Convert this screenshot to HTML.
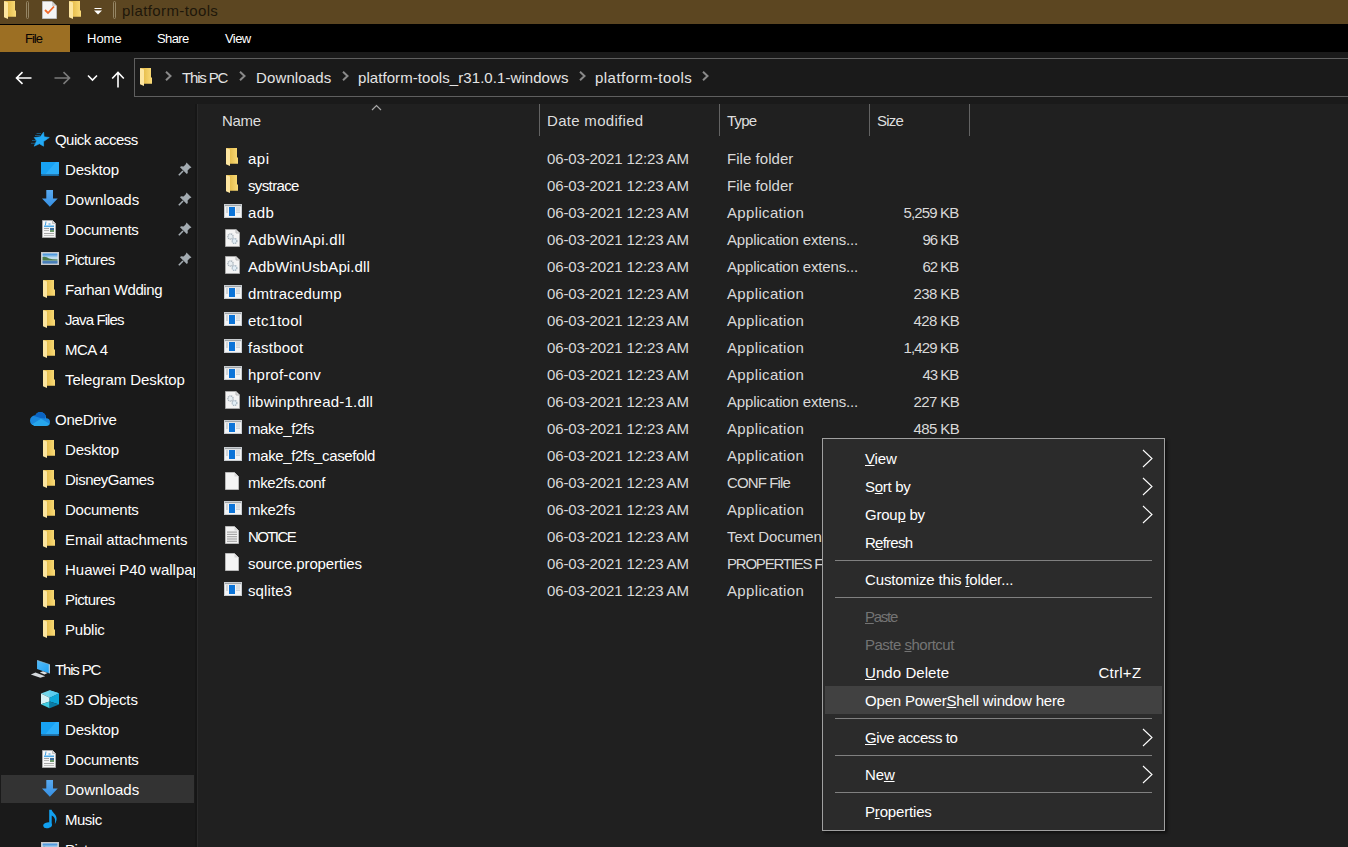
<!DOCTYPE html>
<html><head><meta charset="utf-8"><style>
*{margin:0;padding:0;box-sizing:border-box}
html,body{width:1348px;height:847px;overflow:hidden;background:#202020;font-family:"Liberation Sans",sans-serif;font-size:15px;color:#fff}
.a{position:absolute;white-space:nowrap}
svg{display:block}
.hdr{color:#dedede;top:112px;line-height:18px}
.coldiv{top:104px;width:1px;height:32px;background:#636363}
.tx{line-height:18px}
.dim{color:#d9d9d9}
.sep{left:835px;width:317px;height:1px;background:#808080}
.dis{color:#747474}
u{text-decoration:underline;text-underline-offset:1px;text-decoration-thickness:1px}
</style></head><body>
<div class="a" style="left:0;top:0;width:1348px;height:24px;background:#5c4621"></div>
<div class="a" style="left:0;top:24px;width:1348px;height:28px;background:#000"></div>
<div class="a" style="left:0;top:25px;width:70px;height:27px;background:#9c6f23"></div>
<div class="a" style="left:4px;top:1px"><svg width="12" height="18" viewBox="0 0 12 18"><defs><linearGradient id="fg" x1="0" x2="1" y1="0" y2="0"><stop offset="0.3" stop-color="#e8c050"/><stop offset="1" stop-color="#fadb78"/></linearGradient></defs><path d="M0.5 0 H11 V9.5 H12 V15.8 H4 V16 H0.5Z" fill="url(#fg)"/><path d="M0 0 L4 1.6 V18 L0 16.2Z" fill="#fde6a0"/></svg></div>
<div class="a" style="left:26px;top:1px;width:3px;height:18px;border:1px solid #948564;border-radius:1.5px"></div>
<div class="a" style="left:42px;top:1px"><svg width="15" height="18" viewBox="0 0 15 18"><path d="M0.5 0.5 H10 L14.5 5 V17.5 H0.5Z" fill="#f4f4f4" stroke="#bdbdbd" stroke-width="1"/><path d="M10 0.5 V5 H14.5" fill="#d0d0d0"/><path d="M3 9 L6 12 L12 5.5" fill="none" stroke="#f2692a" stroke-width="1.8"/></svg></div>
<div class="a" style="left:69px;top:1px"><svg width="12" height="18" viewBox="0 0 12 18"><defs><linearGradient id="fg" x1="0" x2="1" y1="0" y2="0"><stop offset="0.3" stop-color="#e8c050"/><stop offset="1" stop-color="#fadb78"/></linearGradient></defs><path d="M0.5 0 H11 V9.5 H12 V15.8 H4 V16 H0.5Z" fill="url(#fg)"/><path d="M0 0 L4 1.6 V18 L0 16.2Z" fill="#fde6a0"/></svg></div>
<div class="a" style="left:93.5px;top:8px"><svg width="8" height="7" viewBox="0 0 8 7"><rect x="0.5" y="0" width="7" height="1" fill="#fff"/><path d="M0 2.5 H8 L4 6.5Z" fill="#fff"/></svg></div>
<div class="a" style="left:113px;top:1px;width:3px;height:18px;border:1px solid #948564;border-radius:1.5px"></div>
<div class="a tx" style="left:122px;top:2px;font-size:15px;line-height:18px;color:#1e170a;letter-spacing:0.385px;">platform-tools</div>
<div class="a" style="left:25px;top:30px;font-size:13px;line-height:17px;color:#080303;letter-spacing:-1.000px;">File</div>
<div class="a" style="left:87px;top:30px;font-size:13px;line-height:17px;letter-spacing:0.000px;">Home</div>
<div class="a" style="left:157px;top:30px;font-size:13px;line-height:17px;letter-spacing:-0.600px;">Share</div>
<div class="a" style="left:225px;top:30px;font-size:13px;line-height:17px;letter-spacing:-0.567px;">View</div>
<div class="a" style="left:0;top:52px;width:1348px;height:52px;background:#1a1a1a"></div>
<div class="a" style="left:134px;top:58px;width:1300px;height:39px;border:1px solid #5f5f5f"></div>
<div class="a" style="left:15px;top:71px"><svg width="17" height="14" viewBox="0 0 17 14"><path d="M16.5 7 H2 M7.5 1.2 L1.5 7 L7.5 12.8" fill="none" stroke="#fff" stroke-width="1.6"/></svg></div>
<div class="a" style="left:54px;top:71px"><svg width="17" height="14" viewBox="0 0 17 14"><path d="M0.5 7 H15 M9.5 1.2 L15.5 7 L9.5 12.8" fill="none" stroke="#7b7b7b" stroke-width="1.6"/></svg></div>
<div class="a" style="left:87px;top:74px"><svg width="11" height="8" viewBox="0 0 11 8"><path d="M1 1.5 L5.5 6 L10 1.5" fill="none" stroke="#fff" stroke-width="1.6"/></svg></div>
<div class="a" style="left:111px;top:71px"><svg width="14" height="17" viewBox="0 0 14 17"><path d="M7 16.5 V2 M1.2 7.5 L7 1.5 L12.8 7.5" fill="none" stroke="#fff" stroke-width="1.6"/></svg></div>
<div class="a" style="left:140px;top:68px"><svg width="12" height="18" viewBox="0 0 12 18"><defs><linearGradient id="fg" x1="0" x2="1" y1="0" y2="0"><stop offset="0.3" stop-color="#e8c050"/><stop offset="1" stop-color="#fadb78"/></linearGradient></defs><path d="M0.5 0 H11 V9.5 H12 V15.8 H4 V16 H0.5Z" fill="url(#fg)"/><path d="M0 0 L4 1.6 V18 L0 16.2Z" fill="#fde6a0"/></svg></div>
<div class="a" style="left:165px;top:71px"><svg width="7" height="10" viewBox="0 0 7 10"><path d="M1 0.8 L5.5 5 L1 9.2" fill="none" stroke="#8a8a8a" stroke-width="2"/></svg></div>
<div class="a" style="left:239px;top:71px"><svg width="7" height="10" viewBox="0 0 7 10"><path d="M1 0.8 L5.5 5 L1 9.2" fill="none" stroke="#8a8a8a" stroke-width="2"/></svg></div>
<div class="a" style="left:342px;top:71px"><svg width="7" height="10" viewBox="0 0 7 10"><path d="M1 0.8 L5.5 5 L1 9.2" fill="none" stroke="#8a8a8a" stroke-width="2"/></svg></div>
<div class="a" style="left:579px;top:71px"><svg width="7" height="10" viewBox="0 0 7 10"><path d="M1 0.8 L5.5 5 L1 9.2" fill="none" stroke="#8a8a8a" stroke-width="2"/></svg></div>
<div class="a" style="left:702px;top:71px"><svg width="7" height="10" viewBox="0 0 7 10"><path d="M1 0.8 L5.5 5 L1 9.2" fill="none" stroke="#8a8a8a" stroke-width="2"/></svg></div>
<div class="a tx" style="left:182px;top:69px;color:#e4e4e4;letter-spacing:-1.167px;">This PC</div>
<div class="a tx" style="left:256px;top:69px;color:#e4e4e4;letter-spacing:0.125px;">Downloads</div>
<div class="a tx" style="left:358px;top:69px;color:#e4e4e4;letter-spacing:0.069px;">platform-tools_r31.0.1-windows</div>
<div class="a tx" style="left:595px;top:69px;color:#e4e4e4;letter-spacing:0.462px;">platform-tools</div>
<div class="a" style="left:0;top:104px;width:196px;height:743px;background:#1a1a1a"></div>
<div class="a" style="left:195px;top:104px;width:2px;height:743px;background:#161616"></div>
<div class="a" style="left:197px;top:104px;width:1px;height:743px;background:#2a2a2a"></div>
<div class="a" style="left:198px;top:104px;width:1150px;height:743px;background:#202020"></div>
<div class="a" style="left:1px;top:775px;width:193px;height:28px;background:#333"></div>
<div class="a" style="left:31px;top:131px"><svg width="20" height="17" viewBox="0 0 20 17"><path d="M5.5 2.5 H10 M4 4.5 H9 M1 9.5 H5 M0 12.3 H4" stroke="#1e88c8" stroke-width="1" opacity=".55"/><path d="M12.6 1.2 L13.1 5.8 L18.3 6.5 L12.6 10.5 L12.6 15.2 L8.4 12.8 L3.2 15.2 L5.6 9.7 L3.2 6.6 L9.2 5.8Z" fill="#22aaf6" stroke="#22aaf6" stroke-width=".6" stroke-linejoin="round"/></svg></div>
<div class="a tx" style="left:55px;top:131px;width:140px;overflow:hidden;letter-spacing:-0.545px;">Quick access</div>
<div class="a" style="left:41px;top:162px"><svg width="18" height="14" viewBox="0 0 18 14"><rect x="0" y="0" width="18" height="12.5" fill="#18a2f4"/><path d="M4 12.5 L15 0 H18 V12.5Z" fill="#3cb6fb" opacity=".55"/><rect x="0" y="12" width="18" height="2" fill="#0c5f98"/><rect x="1" y="12.6" width="16" height=".6" fill="#7cc6f0" opacity=".6"/></svg></div>
<div class="a tx" style="left:65px;top:161px;width:130px;overflow:hidden;letter-spacing:-0.167px;">Desktop</div>
<div class="a" style="left:178px;top:162px"><svg width="14" height="14" viewBox="0 0 14 14"><path d="M8.5 0.5 L13.5 5.5 L11.8 6.2 L9.6 8.4 L9.8 11 L8.8 12 L2 5.2 L3 4.2 L5.6 4.4 L7.8 2.2Z" fill="#a3abb1"/><path d="M5 9 L0.8 13.2" stroke="#a3abb1" stroke-width="1.6"/></svg></div>
<div class="a" style="left:42px;top:190px"><svg width="16" height="17" viewBox="0 0 16 17"><defs><linearGradient id="dg" x1="0" x2="0" y1="0" y2="1"><stop offset="0" stop-color="#5aaaf0"/><stop offset="1" stop-color="#3590e4"/></linearGradient></defs><path d="M4.3 0 H11 V8.6 H15.7 L7.85 16.8 L0 8.6 H4.3Z" fill="url(#dg)"/></svg></div>
<div class="a tx" style="left:65px;top:191px;width:130px;overflow:hidden;letter-spacing:0.000px;">Downloads</div>
<div class="a" style="left:178px;top:192px"><svg width="14" height="14" viewBox="0 0 14 14"><path d="M8.5 0.5 L13.5 5.5 L11.8 6.2 L9.6 8.4 L9.8 11 L8.8 12 L2 5.2 L3 4.2 L5.6 4.4 L7.8 2.2Z" fill="#a3abb1"/><path d="M5 9 L0.8 13.2" stroke="#a3abb1" stroke-width="1.6"/></svg></div>
<div class="a" style="left:42px;top:220px"><svg width="14" height="18" viewBox="0 0 14 18"><path d="M0.5 0.5 H10.5 L13.5 3.5 V17.5 H0.5Z" fill="#f6f6f6" stroke="#a8a8a8"/><path d="M10.5 0.5 V3.5 H13.5" fill="#dedede" stroke="#b0b0b0" stroke-width=".8"/><path d="M3.5 1.5 L4.5 1.5 L3.8 5.5 L2.8 5.5Z" fill="#3a9ae0"/><rect x="6.5" y="3.5" width="2" height="1" fill="#3a9ae0"/><rect x="2" y="5.5" width="10" height="1.6" fill="#4aa8e8"/><rect x="2" y="8" width="5" height="1" fill="#a0a0a0"/><rect x="2" y="10" width="5" height="1" fill="#b8b8b8"/><rect x="8" y="8" width="4" height="4" fill="#3c6e9c"/><rect x="8" y="10" width="4" height="2" fill="#6c9a6c"/><rect x="2" y="13" width="10" height="1" fill="#a8a8a8"/><rect x="2" y="15" width="10" height="1" fill="#c0c0c0"/></svg></div>
<div class="a tx" style="left:65px;top:221px;width:130px;overflow:hidden;letter-spacing:-0.250px;">Documents</div>
<div class="a" style="left:178px;top:222px"><svg width="14" height="14" viewBox="0 0 14 14"><path d="M8.5 0.5 L13.5 5.5 L11.8 6.2 L9.6 8.4 L9.8 11 L8.8 12 L2 5.2 L3 4.2 L5.6 4.4 L7.8 2.2Z" fill="#a3abb1"/><path d="M5 9 L0.8 13.2" stroke="#a3abb1" stroke-width="1.6"/></svg></div>
<div class="a" style="left:41px;top:252px"><svg width="18" height="13" viewBox="0 0 18 13"><rect x="0" y="0" width="18" height="13" fill="#e6e6e6"/><rect x="0.5" y="0.5" width="17" height="12" fill="none" stroke="#c8c8c8"/><defs><linearGradient id="pg" x1="0" x2="0" y1="0" y2="1"><stop offset="0" stop-color="#2f86d8"/><stop offset=".45" stop-color="#cfe6f2"/><stop offset="1" stop-color="#5e8fb8"/></linearGradient></defs><rect x="1.5" y="1.5" width="15" height="10" fill="url(#pg)"/><path d="M1.5 5 Q5 4 8 6.5 Q11 7.5 16.5 7.5 V8.5 H1.5Z" fill="#4a7a4a"/><rect x="1.5" y="9" width="15" height="2.5" fill="#3c74b4" opacity=".8"/></svg></div>
<div class="a tx" style="left:65px;top:251px;width:130px;overflow:hidden;letter-spacing:-0.571px;">Pictures</div>
<div class="a" style="left:178px;top:252px"><svg width="14" height="14" viewBox="0 0 14 14"><path d="M8.5 0.5 L13.5 5.5 L11.8 6.2 L9.6 8.4 L9.8 11 L8.8 12 L2 5.2 L3 4.2 L5.6 4.4 L7.8 2.2Z" fill="#a3abb1"/><path d="M5 9 L0.8 13.2" stroke="#a3abb1" stroke-width="1.6"/></svg></div>
<div class="a" style="left:43px;top:280px"><svg width="12" height="18" viewBox="0 0 12 18"><defs><linearGradient id="fg" x1="0" x2="1" y1="0" y2="0"><stop offset="0.3" stop-color="#e8c050"/><stop offset="1" stop-color="#fadb78"/></linearGradient></defs><path d="M0.5 0 H11 V9.5 H12 V15.8 H4 V16 H0.5Z" fill="url(#fg)"/><path d="M0 0 L4 1.6 V18 L0 16.2Z" fill="#fde6a0"/></svg></div>
<div class="a tx" style="left:65px;top:281px;width:130px;overflow:hidden;letter-spacing:-0.417px;">Farhan Wdding</div>
<div class="a" style="left:43px;top:310px"><svg width="12" height="18" viewBox="0 0 12 18"><defs><linearGradient id="fg" x1="0" x2="1" y1="0" y2="0"><stop offset="0.3" stop-color="#e8c050"/><stop offset="1" stop-color="#fadb78"/></linearGradient></defs><path d="M0.5 0 H11 V9.5 H12 V15.8 H4 V16 H0.5Z" fill="url(#fg)"/><path d="M0 0 L4 1.6 V18 L0 16.2Z" fill="#fde6a0"/></svg></div>
<div class="a tx" style="left:65px;top:311px;width:130px;overflow:hidden;letter-spacing:-0.889px;">Java Files</div>
<div class="a" style="left:43px;top:340px"><svg width="12" height="18" viewBox="0 0 12 18"><defs><linearGradient id="fg" x1="0" x2="1" y1="0" y2="0"><stop offset="0.3" stop-color="#e8c050"/><stop offset="1" stop-color="#fadb78"/></linearGradient></defs><path d="M0.5 0 H11 V9.5 H12 V15.8 H4 V16 H0.5Z" fill="url(#fg)"/><path d="M0 0 L4 1.6 V18 L0 16.2Z" fill="#fde6a0"/></svg></div>
<div class="a tx" style="left:65px;top:341px;width:130px;overflow:hidden;letter-spacing:-0.500px;">MCA 4</div>
<div class="a" style="left:43px;top:370px"><svg width="12" height="18" viewBox="0 0 12 18"><defs><linearGradient id="fg" x1="0" x2="1" y1="0" y2="0"><stop offset="0.3" stop-color="#e8c050"/><stop offset="1" stop-color="#fadb78"/></linearGradient></defs><path d="M0.5 0 H11 V9.5 H12 V15.8 H4 V16 H0.5Z" fill="url(#fg)"/><path d="M0 0 L4 1.6 V18 L0 16.2Z" fill="#fde6a0"/></svg></div>
<div class="a tx" style="left:65px;top:371px;width:130px;overflow:hidden;letter-spacing:-0.067px;">Telegram Desktop</div>
<div class="a" style="left:30px;top:412px"><svg width="20" height="14" viewBox="0 0 20 14"><defs><clipPath id="cc"><circle cx="10.5" cy="5.6" r="5.6"/><circle cx="5" cy="8.6" r="5"/><circle cx="16.2" cy="10" r="3.8"/><rect x="4" y="9" width="12.5" height="5"/></clipPath></defs><g clip-path="url(#cc)"><rect x="0" y="0" width="20" height="14" fill="#1a88de"/><path d="M4 0 H17 L15 6.5 L10.5 6 L4 4Z" fill="#0b64c2"/><path d="M0 13.5 L11 6.8 L20 12 V14 H0Z" fill="#27a6ec"/></g></svg></div>
<div class="a tx" style="left:55px;top:411px;width:140px;overflow:hidden;letter-spacing:-0.214px;">OneDrive</div>
<div class="a" style="left:43px;top:440px"><svg width="12" height="18" viewBox="0 0 12 18"><defs><linearGradient id="fg" x1="0" x2="1" y1="0" y2="0"><stop offset="0.3" stop-color="#e8c050"/><stop offset="1" stop-color="#fadb78"/></linearGradient></defs><path d="M0.5 0 H11 V9.5 H12 V15.8 H4 V16 H0.5Z" fill="url(#fg)"/><path d="M0 0 L4 1.6 V18 L0 16.2Z" fill="#fde6a0"/></svg></div>
<div class="a tx" style="left:65px;top:441px;width:130px;overflow:hidden;letter-spacing:-0.167px;">Desktop</div>
<div class="a" style="left:43px;top:470px"><svg width="12" height="18" viewBox="0 0 12 18"><defs><linearGradient id="fg" x1="0" x2="1" y1="0" y2="0"><stop offset="0.3" stop-color="#e8c050"/><stop offset="1" stop-color="#fadb78"/></linearGradient></defs><path d="M0.5 0 H11 V9.5 H12 V15.8 H4 V16 H0.5Z" fill="url(#fg)"/><path d="M0 0 L4 1.6 V18 L0 16.2Z" fill="#fde6a0"/></svg></div>
<div class="a tx" style="left:65px;top:471px;width:130px;overflow:hidden;letter-spacing:-0.500px;">DisneyGames</div>
<div class="a" style="left:43px;top:500px"><svg width="12" height="18" viewBox="0 0 12 18"><defs><linearGradient id="fg" x1="0" x2="1" y1="0" y2="0"><stop offset="0.3" stop-color="#e8c050"/><stop offset="1" stop-color="#fadb78"/></linearGradient></defs><path d="M0.5 0 H11 V9.5 H12 V15.8 H4 V16 H0.5Z" fill="url(#fg)"/><path d="M0 0 L4 1.6 V18 L0 16.2Z" fill="#fde6a0"/></svg></div>
<div class="a tx" style="left:65px;top:501px;width:130px;overflow:hidden;letter-spacing:-0.250px;">Documents</div>
<div class="a" style="left:43px;top:530px"><svg width="12" height="18" viewBox="0 0 12 18"><defs><linearGradient id="fg" x1="0" x2="1" y1="0" y2="0"><stop offset="0.3" stop-color="#e8c050"/><stop offset="1" stop-color="#fadb78"/></linearGradient></defs><path d="M0.5 0 H11 V9.5 H12 V15.8 H4 V16 H0.5Z" fill="url(#fg)"/><path d="M0 0 L4 1.6 V18 L0 16.2Z" fill="#fde6a0"/></svg></div>
<div class="a tx" style="left:65px;top:531px;width:130px;overflow:hidden;letter-spacing:-0.062px;">Email attachments</div>
<div class="a" style="left:43px;top:560px"><svg width="12" height="18" viewBox="0 0 12 18"><defs><linearGradient id="fg" x1="0" x2="1" y1="0" y2="0"><stop offset="0.3" stop-color="#e8c050"/><stop offset="1" stop-color="#fadb78"/></linearGradient></defs><path d="M0.5 0 H11 V9.5 H12 V15.8 H4 V16 H0.5Z" fill="url(#fg)"/><path d="M0 0 L4 1.6 V18 L0 16.2Z" fill="#fde6a0"/></svg></div>
<div class="a tx" style="left:65px;top:561px;width:130px;overflow:hidden;">Huawei P40 wallpapers</div>
<div class="a" style="left:43px;top:590px"><svg width="12" height="18" viewBox="0 0 12 18"><defs><linearGradient id="fg" x1="0" x2="1" y1="0" y2="0"><stop offset="0.3" stop-color="#e8c050"/><stop offset="1" stop-color="#fadb78"/></linearGradient></defs><path d="M0.5 0 H11 V9.5 H12 V15.8 H4 V16 H0.5Z" fill="url(#fg)"/><path d="M0 0 L4 1.6 V18 L0 16.2Z" fill="#fde6a0"/></svg></div>
<div class="a tx" style="left:65px;top:591px;width:130px;overflow:hidden;letter-spacing:-0.571px;">Pictures</div>
<div class="a" style="left:43px;top:620px"><svg width="12" height="18" viewBox="0 0 12 18"><defs><linearGradient id="fg" x1="0" x2="1" y1="0" y2="0"><stop offset="0.3" stop-color="#e8c050"/><stop offset="1" stop-color="#fadb78"/></linearGradient></defs><path d="M0.5 0 H11 V9.5 H12 V15.8 H4 V16 H0.5Z" fill="url(#fg)"/><path d="M0 0 L4 1.6 V18 L0 16.2Z" fill="#fde6a0"/></svg></div>
<div class="a tx" style="left:65px;top:621px;width:130px;overflow:hidden;letter-spacing:-0.200px;">Public</div>
<div class="a" style="left:30px;top:660px"><svg width="20" height="19" viewBox="0 0 20 19"><defs><linearGradient id="mg" x1="0" x2="1" y1="0" y2="1"><stop offset="0" stop-color="#58bcf8"/><stop offset="1" stop-color="#1aa0f4"/></linearGradient></defs><path d="M7.05 0.3 L19.8 4.6 V13.5 L7.05 8.9Z" fill="url(#mg)"/><path d="M19.3 4.6 V13.3" stroke="#c8d4dc" stroke-width="1"/><path d="M7.05 0.3 L19.8 4.6" stroke="#9ab8c8" stroke-width=".6"/><path d="M0.8 14.4 L5.5 12.6 L15.2 16.2 L10.3 17.8Z" fill="#d4d8dc"/><path d="M9.8 12.6 L13 11.2 L17.6 13 L14.5 14.5Z" fill="#dcdfe2"/></svg></div>
<div class="a tx" style="left:55px;top:661px;width:140px;overflow:hidden;letter-spacing:-1.167px;">This PC</div>
<div class="a" style="left:41px;top:689.5px"><svg width="18" height="19" viewBox="0 0 18 19"><path d="M8.6 0.2 L18 3.3 L8.6 7.8 L0 3.5Z" fill="#72d6ea"/><path d="M8.6 0.2 L18 3.3 L8.6 7.8Z" fill="#5ccdf0"/><path d="M0 3.5 L8.6 7.8 V11.5 L0 14.2Z" fill="#d6f2f6"/><path d="M0 14.2 L8.6 11.5 V18.3Z" fill="#40cce2"/><path d="M8.6 7.8 L18 3.3 V14.5 L8.6 11.5Z" fill="#0ea8da"/><path d="M8.6 11.5 L18 14.5 L8.6 18.3Z" fill="#0a7ca6"/></svg></div>
<div class="a tx" style="left:65px;top:691px;width:130px;overflow:hidden;letter-spacing:-0.144px;">3D Objects</div>
<div class="a" style="left:41px;top:722px"><svg width="18" height="14" viewBox="0 0 18 14"><rect x="0" y="0" width="18" height="12.5" fill="#18a2f4"/><path d="M4 12.5 L15 0 H18 V12.5Z" fill="#3cb6fb" opacity=".55"/><rect x="0" y="12" width="18" height="2" fill="#0c5f98"/><rect x="1" y="12.6" width="16" height=".6" fill="#7cc6f0" opacity=".6"/></svg></div>
<div class="a tx" style="left:65px;top:721px;width:130px;overflow:hidden;letter-spacing:-0.167px;">Desktop</div>
<div class="a" style="left:42px;top:750px"><svg width="14" height="18" viewBox="0 0 14 18"><path d="M0.5 0.5 H10.5 L13.5 3.5 V17.5 H0.5Z" fill="#f6f6f6" stroke="#a8a8a8"/><path d="M10.5 0.5 V3.5 H13.5" fill="#dedede" stroke="#b0b0b0" stroke-width=".8"/><path d="M3.5 1.5 L4.5 1.5 L3.8 5.5 L2.8 5.5Z" fill="#3a9ae0"/><rect x="6.5" y="3.5" width="2" height="1" fill="#3a9ae0"/><rect x="2" y="5.5" width="10" height="1.6" fill="#4aa8e8"/><rect x="2" y="8" width="5" height="1" fill="#a0a0a0"/><rect x="2" y="10" width="5" height="1" fill="#b8b8b8"/><rect x="8" y="8" width="4" height="4" fill="#3c6e9c"/><rect x="8" y="10" width="4" height="2" fill="#6c9a6c"/><rect x="2" y="13" width="10" height="1" fill="#a8a8a8"/><rect x="2" y="15" width="10" height="1" fill="#c0c0c0"/></svg></div>
<div class="a tx" style="left:65px;top:751px;width:130px;overflow:hidden;letter-spacing:-0.250px;">Documents</div>
<div class="a" style="left:42px;top:780px"><svg width="16" height="17" viewBox="0 0 16 17"><defs><linearGradient id="dg" x1="0" x2="0" y1="0" y2="1"><stop offset="0" stop-color="#5aaaf0"/><stop offset="1" stop-color="#3590e4"/></linearGradient></defs><path d="M4.3 0 H11 V8.6 H15.7 L7.85 16.8 L0 8.6 H4.3Z" fill="url(#dg)"/></svg></div>
<div class="a tx" style="left:65px;top:781px;width:130px;overflow:hidden;letter-spacing:0.000px;">Downloads</div>
<div class="a" style="left:43px;top:809px"><svg width="15" height="20" viewBox="0 0 15 20"><path d="M6.2 0.7 H8.6 C9.2 3.5 13.8 5.5 13.6 10 C13.4 12.5 12.6 14 11.8 15.3 C12.2 13 12.4 11 11.6 9.2 C10.9 7.8 9.8 7 8.7 6.5 V16.2 H6.2Z" fill="#11a0f0"/><ellipse cx="4.6" cy="16.3" rx="4.4" ry="2.9" transform="rotate(-12 4.6 16.3)" fill="#11a0f0"/></svg></div>
<div class="a tx" style="left:65px;top:811px;width:130px;overflow:hidden;letter-spacing:-0.500px;">Music</div>
<div class="a" style="left:41px;top:842px"><svg width="18" height="13" viewBox="0 0 18 13"><rect x="0" y="0" width="18" height="13" fill="#e6e6e6"/><rect x="0.5" y="0.5" width="17" height="12" fill="none" stroke="#c8c8c8"/><defs><linearGradient id="pg" x1="0" x2="0" y1="0" y2="1"><stop offset="0" stop-color="#2f86d8"/><stop offset=".45" stop-color="#cfe6f2"/><stop offset="1" stop-color="#5e8fb8"/></linearGradient></defs><rect x="1.5" y="1.5" width="15" height="10" fill="url(#pg)"/><path d="M1.5 5 Q5 4 8 6.5 Q11 7.5 16.5 7.5 V8.5 H1.5Z" fill="#4a7a4a"/><rect x="1.5" y="9" width="15" height="2.5" fill="#3c74b4" opacity=".8"/></svg></div>
<div class="a tx" style="left:65px;top:841px;width:130px;overflow:hidden;letter-spacing:-0.571px;">Pictures</div>
<div class="a hdr" style="left:222px;letter-spacing:-0.333px;">Name</div>
<div class="a hdr" style="left:547px;letter-spacing:0.300px;">Date modified</div>
<div class="a hdr" style="left:727px;letter-spacing:-0.800px;">Type</div>
<div class="a hdr" style="left:877px;letter-spacing:-0.767px;">Size</div>
<div class="a coldiv" style="left:539px"></div>
<div class="a coldiv" style="left:719px"></div>
<div class="a coldiv" style="left:869px"></div>
<div class="a coldiv" style="left:969px"></div>
<div class="a" style="left:371px;top:104px"><svg width="11" height="7" viewBox="0 0 11 7"><path d="M1 6 L5.5 1.5 L10 6" fill="none" stroke="#a8a8a8" stroke-width="1.2"/></svg></div>
<div class="a" style="left:226px;top:148px"><svg width="12" height="18" viewBox="0 0 12 18"><defs><linearGradient id="fg" x1="0" x2="1" y1="0" y2="0"><stop offset="0.3" stop-color="#e8c050"/><stop offset="1" stop-color="#fadb78"/></linearGradient></defs><path d="M0.5 0 H11 V9.5 H12 V15.8 H4 V16 H0.5Z" fill="url(#fg)"/><path d="M0 0 L4 1.6 V18 L0 16.2Z" fill="#fde6a0"/></svg></div>
<div class="a tx" style="left:248px;top:150px;letter-spacing:0.500px;">api</div>
<div class="a tx dim" style="left:547px;top:150px;letter-spacing:-0.128px;">06-03-2021 12:23 AM</div>
<div class="a tx dim" style="left:727px;top:150px;letter-spacing:0.050px;">File folder</div>
<div class="a" style="left:226px;top:175px"><svg width="12" height="18" viewBox="0 0 12 18"><defs><linearGradient id="fg" x1="0" x2="1" y1="0" y2="0"><stop offset="0.3" stop-color="#e8c050"/><stop offset="1" stop-color="#fadb78"/></linearGradient></defs><path d="M0.5 0 H11 V9.5 H12 V15.8 H4 V16 H0.5Z" fill="url(#fg)"/><path d="M0 0 L4 1.6 V18 L0 16.2Z" fill="#fde6a0"/></svg></div>
<div class="a tx" style="left:248px;top:177px;letter-spacing:-0.629px;">systrace</div>
<div class="a tx dim" style="left:547px;top:177px;letter-spacing:-0.128px;">06-03-2021 12:23 AM</div>
<div class="a tx dim" style="left:727px;top:177px;letter-spacing:0.050px;">File folder</div>
<div class="a" style="left:224px;top:204px"><svg width="18" height="14" viewBox="0 0 18 14"><rect x="0" y="0" width="18" height="14" fill="#c9cdd1"/><rect x="1" y="1" width="16" height="12" fill="#f3f4f5"/><rect x="1" y="1" width="16" height="1.2" fill="#9ea4a8"/><rect x="5" y="3" width="6" height="9" fill="#0c74d8"/><rect x="12" y="3.5" width="4" height="1" fill="#c4c8cc"/><rect x="12" y="5.5" width="4" height="1" fill="#c4c8cc"/><rect x="12" y="7.5" width="4" height="1.5" fill="#d0d4d8"/><rect x="2" y="3.5" width="2" height="1" fill="#b4b8bc"/><rect x="2" y="5.5" width="2" height="1" fill="#b4b8bc"/><rect x="2" y="7.5" width="2" height="1" fill="#b4b8bc"/></svg></div>
<div class="a tx" style="left:248px;top:204px;letter-spacing:0.400px;">adb</div>
<div class="a tx dim" style="left:547px;top:204px;letter-spacing:-0.128px;">06-03-2021 12:23 AM</div>
<div class="a tx dim" style="left:727px;top:204px;letter-spacing:0.340px;">Application</div>
<div class="a tx dim" style="left:903.5px;top:204px;letter-spacing:-0.857px;">5,259 KB</div>
<div class="a" style="left:225px;top:229px"><svg width="15" height="18" viewBox="0 0 15 18"><path d="M0.5 0.5 H11 L14.5 4 V17.5 H0.5Z" fill="#f4f4f4" stroke="#a8a8a8"/><path d="M11 0.5 V4 H14.5" fill="#e0e0e0" stroke="#b8b8b8"/><circle cx="5.5" cy="7.5" r="2.6" fill="#e8eef2" stroke="#aab4bc" stroke-width="1.4" stroke-dasharray="1.2 .6"/><circle cx="9.5" cy="12" r="2.4" fill="#e2eef6" stroke="#a4b4c0" stroke-width="1.3" stroke-dasharray="1.2 .6"/></svg></div>
<div class="a tx" style="left:248px;top:231px;letter-spacing:0.292px;">AdbWinApi.dll</div>
<div class="a tx dim" style="left:547px;top:231px;letter-spacing:-0.128px;">06-03-2021 12:23 AM</div>
<div class="a tx dim" style="left:727px;top:231px;letter-spacing:-0.150px;">Application extens...</div>
<div class="a tx dim" style="left:922.5px;top:231px;letter-spacing:-1.000px;">96 KB</div>
<div class="a" style="left:225px;top:256px"><svg width="15" height="18" viewBox="0 0 15 18"><path d="M0.5 0.5 H11 L14.5 4 V17.5 H0.5Z" fill="#f4f4f4" stroke="#a8a8a8"/><path d="M11 0.5 V4 H14.5" fill="#e0e0e0" stroke="#b8b8b8"/><circle cx="5.5" cy="7.5" r="2.6" fill="#e8eef2" stroke="#aab4bc" stroke-width="1.4" stroke-dasharray="1.2 .6"/><circle cx="9.5" cy="12" r="2.4" fill="#e2eef6" stroke="#a4b4c0" stroke-width="1.3" stroke-dasharray="1.2 .6"/></svg></div>
<div class="a tx" style="left:248px;top:258px;letter-spacing:0.120px;">AdbWinUsbApi.dll</div>
<div class="a tx dim" style="left:547px;top:258px;letter-spacing:-0.128px;">06-03-2021 12:23 AM</div>
<div class="a tx dim" style="left:727px;top:258px;letter-spacing:-0.150px;">Application extens...</div>
<div class="a tx dim" style="left:922.5px;top:258px;letter-spacing:-1.000px;">62 KB</div>
<div class="a" style="left:224px;top:285px"><svg width="18" height="14" viewBox="0 0 18 14"><rect x="0" y="0" width="18" height="14" fill="#c9cdd1"/><rect x="1" y="1" width="16" height="12" fill="#f3f4f5"/><rect x="1" y="1" width="16" height="1.2" fill="#9ea4a8"/><rect x="5" y="3" width="6" height="9" fill="#0c74d8"/><rect x="12" y="3.5" width="4" height="1" fill="#c4c8cc"/><rect x="12" y="5.5" width="4" height="1" fill="#c4c8cc"/><rect x="12" y="7.5" width="4" height="1.5" fill="#d0d4d8"/><rect x="2" y="3.5" width="2" height="1" fill="#b4b8bc"/><rect x="2" y="5.5" width="2" height="1" fill="#b4b8bc"/><rect x="2" y="7.5" width="2" height="1" fill="#b4b8bc"/></svg></div>
<div class="a tx" style="left:248px;top:285px;letter-spacing:0.180px;">dmtracedump</div>
<div class="a tx dim" style="left:547px;top:285px;letter-spacing:-0.128px;">06-03-2021 12:23 AM</div>
<div class="a tx dim" style="left:727px;top:285px;letter-spacing:0.340px;">Application</div>
<div class="a tx dim" style="left:913.5px;top:285px;letter-spacing:-0.600px;">238 KB</div>
<div class="a" style="left:224px;top:312px"><svg width="18" height="14" viewBox="0 0 18 14"><rect x="0" y="0" width="18" height="14" fill="#c9cdd1"/><rect x="1" y="1" width="16" height="12" fill="#f3f4f5"/><rect x="1" y="1" width="16" height="1.2" fill="#9ea4a8"/><rect x="5" y="3" width="6" height="9" fill="#0c74d8"/><rect x="12" y="3.5" width="4" height="1" fill="#c4c8cc"/><rect x="12" y="5.5" width="4" height="1" fill="#c4c8cc"/><rect x="12" y="7.5" width="4" height="1.5" fill="#d0d4d8"/><rect x="2" y="3.5" width="2" height="1" fill="#b4b8bc"/><rect x="2" y="5.5" width="2" height="1" fill="#b4b8bc"/><rect x="2" y="7.5" width="2" height="1" fill="#b4b8bc"/></svg></div>
<div class="a tx" style="left:248px;top:312px;letter-spacing:0.214px;">etc1tool</div>
<div class="a tx dim" style="left:547px;top:312px;letter-spacing:-0.128px;">06-03-2021 12:23 AM</div>
<div class="a tx dim" style="left:727px;top:312px;letter-spacing:0.340px;">Application</div>
<div class="a tx dim" style="left:913.5px;top:312px;letter-spacing:-0.600px;">428 KB</div>
<div class="a" style="left:224px;top:339px"><svg width="18" height="14" viewBox="0 0 18 14"><rect x="0" y="0" width="18" height="14" fill="#c9cdd1"/><rect x="1" y="1" width="16" height="12" fill="#f3f4f5"/><rect x="1" y="1" width="16" height="1.2" fill="#9ea4a8"/><rect x="5" y="3" width="6" height="9" fill="#0c74d8"/><rect x="12" y="3.5" width="4" height="1" fill="#c4c8cc"/><rect x="12" y="5.5" width="4" height="1" fill="#c4c8cc"/><rect x="12" y="7.5" width="4" height="1.5" fill="#d0d4d8"/><rect x="2" y="3.5" width="2" height="1" fill="#b4b8bc"/><rect x="2" y="5.5" width="2" height="1" fill="#b4b8bc"/><rect x="2" y="7.5" width="2" height="1" fill="#b4b8bc"/></svg></div>
<div class="a tx" style="left:248px;top:339px;letter-spacing:0.243px;">fastboot</div>
<div class="a tx dim" style="left:547px;top:339px;letter-spacing:-0.128px;">06-03-2021 12:23 AM</div>
<div class="a tx dim" style="left:727px;top:339px;letter-spacing:0.340px;">Application</div>
<div class="a tx dim" style="left:903.5px;top:339px;letter-spacing:-0.857px;">1,429 KB</div>
<div class="a" style="left:224px;top:366px"><svg width="18" height="14" viewBox="0 0 18 14"><rect x="0" y="0" width="18" height="14" fill="#c9cdd1"/><rect x="1" y="1" width="16" height="12" fill="#f3f4f5"/><rect x="1" y="1" width="16" height="1.2" fill="#9ea4a8"/><rect x="5" y="3" width="6" height="9" fill="#0c74d8"/><rect x="12" y="3.5" width="4" height="1" fill="#c4c8cc"/><rect x="12" y="5.5" width="4" height="1" fill="#c4c8cc"/><rect x="12" y="7.5" width="4" height="1.5" fill="#d0d4d8"/><rect x="2" y="3.5" width="2" height="1" fill="#b4b8bc"/><rect x="2" y="5.5" width="2" height="1" fill="#b4b8bc"/><rect x="2" y="7.5" width="2" height="1" fill="#b4b8bc"/></svg></div>
<div class="a tx" style="left:248px;top:366px;letter-spacing:0.222px;">hprof-conv</div>
<div class="a tx dim" style="left:547px;top:366px;letter-spacing:-0.128px;">06-03-2021 12:23 AM</div>
<div class="a tx dim" style="left:727px;top:366px;letter-spacing:0.340px;">Application</div>
<div class="a tx dim" style="left:922.5px;top:366px;letter-spacing:-1.000px;">43 KB</div>
<div class="a" style="left:225px;top:391px"><svg width="15" height="18" viewBox="0 0 15 18"><path d="M0.5 0.5 H11 L14.5 4 V17.5 H0.5Z" fill="#f4f4f4" stroke="#a8a8a8"/><path d="M11 0.5 V4 H14.5" fill="#e0e0e0" stroke="#b8b8b8"/><circle cx="5.5" cy="7.5" r="2.6" fill="#e8eef2" stroke="#aab4bc" stroke-width="1.4" stroke-dasharray="1.2 .6"/><circle cx="9.5" cy="12" r="2.4" fill="#e2eef6" stroke="#a4b4c0" stroke-width="1.3" stroke-dasharray="1.2 .6"/></svg></div>
<div class="a tx" style="left:248px;top:393px;letter-spacing:0.222px;">libwinpthread-1.dll</div>
<div class="a tx dim" style="left:547px;top:393px;letter-spacing:-0.128px;">06-03-2021 12:23 AM</div>
<div class="a tx dim" style="left:727px;top:393px;letter-spacing:-0.150px;">Application extens...</div>
<div class="a tx dim" style="left:913.5px;top:393px;letter-spacing:-0.600px;">227 KB</div>
<div class="a" style="left:224px;top:420px"><svg width="18" height="14" viewBox="0 0 18 14"><rect x="0" y="0" width="18" height="14" fill="#c9cdd1"/><rect x="1" y="1" width="16" height="12" fill="#f3f4f5"/><rect x="1" y="1" width="16" height="1.2" fill="#9ea4a8"/><rect x="5" y="3" width="6" height="9" fill="#0c74d8"/><rect x="12" y="3.5" width="4" height="1" fill="#c4c8cc"/><rect x="12" y="5.5" width="4" height="1" fill="#c4c8cc"/><rect x="12" y="7.5" width="4" height="1.5" fill="#d0d4d8"/><rect x="2" y="3.5" width="2" height="1" fill="#b4b8bc"/><rect x="2" y="5.5" width="2" height="1" fill="#b4b8bc"/><rect x="2" y="7.5" width="2" height="1" fill="#b4b8bc"/></svg></div>
<div class="a tx" style="left:248px;top:420px;letter-spacing:-0.375px;">make_f2fs</div>
<div class="a tx dim" style="left:547px;top:420px;letter-spacing:-0.128px;">06-03-2021 12:23 AM</div>
<div class="a tx dim" style="left:727px;top:420px;letter-spacing:0.340px;">Application</div>
<div class="a tx dim" style="left:913.5px;top:420px;letter-spacing:-0.600px;">485 KB</div>
<div class="a" style="left:224px;top:447px"><svg width="18" height="14" viewBox="0 0 18 14"><rect x="0" y="0" width="18" height="14" fill="#c9cdd1"/><rect x="1" y="1" width="16" height="12" fill="#f3f4f5"/><rect x="1" y="1" width="16" height="1.2" fill="#9ea4a8"/><rect x="5" y="3" width="6" height="9" fill="#0c74d8"/><rect x="12" y="3.5" width="4" height="1" fill="#c4c8cc"/><rect x="12" y="5.5" width="4" height="1" fill="#c4c8cc"/><rect x="12" y="7.5" width="4" height="1.5" fill="#d0d4d8"/><rect x="2" y="3.5" width="2" height="1" fill="#b4b8bc"/><rect x="2" y="5.5" width="2" height="1" fill="#b4b8bc"/><rect x="2" y="7.5" width="2" height="1" fill="#b4b8bc"/></svg></div>
<div class="a tx" style="left:248px;top:447px;letter-spacing:-0.353px;">make_f2fs_casefold</div>
<div class="a tx dim" style="left:547px;top:447px;letter-spacing:-0.128px;">06-03-2021 12:23 AM</div>
<div class="a tx dim" style="left:727px;top:447px;letter-spacing:0.340px;">Application</div>
<div class="a" style="left:225px;top:472px"><svg width="14" height="18" viewBox="0 0 14 18"><path d="M0.5 0.5 H9.5 L13.5 4.5 V17.5 H0.5Z" fill="#f4f4f4" stroke="#b8b8b8"/><path d="M9.5 0.5 V4.5 H13.5" fill="#d8d8d8"/></svg></div>
<div class="a tx" style="left:248px;top:474px;letter-spacing:-0.340px;">mke2fs.conf</div>
<div class="a tx dim" style="left:547px;top:474px;letter-spacing:-0.128px;">06-03-2021 12:23 AM</div>
<div class="a tx dim" style="left:727px;top:474px;letter-spacing:-0.875px;">CONF File</div>
<div class="a" style="left:224px;top:501px"><svg width="18" height="14" viewBox="0 0 18 14"><rect x="0" y="0" width="18" height="14" fill="#c9cdd1"/><rect x="1" y="1" width="16" height="12" fill="#f3f4f5"/><rect x="1" y="1" width="16" height="1.2" fill="#9ea4a8"/><rect x="5" y="3" width="6" height="9" fill="#0c74d8"/><rect x="12" y="3.5" width="4" height="1" fill="#c4c8cc"/><rect x="12" y="5.5" width="4" height="1" fill="#c4c8cc"/><rect x="12" y="7.5" width="4" height="1.5" fill="#d0d4d8"/><rect x="2" y="3.5" width="2" height="1" fill="#b4b8bc"/><rect x="2" y="5.5" width="2" height="1" fill="#b4b8bc"/><rect x="2" y="7.5" width="2" height="1" fill="#b4b8bc"/></svg></div>
<div class="a tx" style="left:248px;top:501px;letter-spacing:-0.240px;">mke2fs</div>
<div class="a tx dim" style="left:547px;top:501px;letter-spacing:-0.128px;">06-03-2021 12:23 AM</div>
<div class="a tx dim" style="left:727px;top:501px;letter-spacing:0.340px;">Application</div>
<div class="a" style="left:225px;top:526px"><svg width="14" height="18" viewBox="0 0 14 18"><path d="M0.5 0.5 H9.5 L13.5 4.5 V17.5 H0.5Z" fill="#f4f4f4" stroke="#b8b8b8"/><path d="M9.5 0.5 V4.5 H13.5" fill="#d8d8d8"/><rect x="2" y="5.5" width="10" height="1.2" fill="#a8a8a8"/><rect x="2" y="7.8" width="10" height="1.2" fill="#a8a8a8"/><rect x="2" y="10.1" width="10" height="1.2" fill="#a8a8a8"/><rect x="2" y="12.4" width="10" height="1.2" fill="#a8a8a8"/><rect x="2" y="14.7" width="10" height="1.2" fill="#a8a8a8"/></svg></div>
<div class="a tx" style="left:248px;top:528px;letter-spacing:-1.600px;">NOTICE</div>
<div class="a tx dim" style="left:547px;top:528px;letter-spacing:-0.128px;">06-03-2021 12:23 AM</div>
<div class="a tx dim" style="left:727px;top:528px;letter-spacing:-0.083px;">Text Document</div>
<div class="a" style="left:225px;top:553px"><svg width="14" height="18" viewBox="0 0 14 18"><path d="M0.5 0.5 H9.5 L13.5 4.5 V17.5 H0.5Z" fill="#f4f4f4" stroke="#b8b8b8"/><path d="M9.5 0.5 V4.5 H13.5" fill="#d8d8d8"/></svg></div>
<div class="a tx" style="left:248px;top:555px;letter-spacing:-0.125px;">source.properties</div>
<div class="a tx dim" style="left:547px;top:555px;letter-spacing:-0.128px;">06-03-2021 12:23 AM</div>
<div class="a tx dim" style="left:727px;top:555px;letter-spacing:-1.214px;">PROPERTIES File</div>
<div class="a" style="left:224px;top:582px"><svg width="18" height="14" viewBox="0 0 18 14"><rect x="0" y="0" width="18" height="14" fill="#c9cdd1"/><rect x="1" y="1" width="16" height="12" fill="#f3f4f5"/><rect x="1" y="1" width="16" height="1.2" fill="#9ea4a8"/><rect x="5" y="3" width="6" height="9" fill="#0c74d8"/><rect x="12" y="3.5" width="4" height="1" fill="#c4c8cc"/><rect x="12" y="5.5" width="4" height="1" fill="#c4c8cc"/><rect x="12" y="7.5" width="4" height="1.5" fill="#d0d4d8"/><rect x="2" y="3.5" width="2" height="1" fill="#b4b8bc"/><rect x="2" y="5.5" width="2" height="1" fill="#b4b8bc"/><rect x="2" y="7.5" width="2" height="1" fill="#b4b8bc"/></svg></div>
<div class="a tx" style="left:248px;top:582px;letter-spacing:0.100px;">sqlite3</div>
<div class="a tx dim" style="left:547px;top:582px;letter-spacing:-0.128px;">06-03-2021 12:23 AM</div>
<div class="a tx dim" style="left:727px;top:582px;letter-spacing:0.340px;">Application</div>
<div class="a" style="left:822px;top:438px;width:343px;height:393px;background:#2b2b2b;border:1px solid #a0a0a0;box-shadow:2px 2px 3px rgba(0,0,0,.55)"></div>
<div class="a" style="left:825px;top:686px;width:337px;height:28px;background:#414141"></div>
<div class="a tx" style="left:865px;top:450px;letter-spacing:-0.167px;"><u>V</u>iew</div>
<div class="a" style="left:1142px;top:449px"><svg width="11" height="19" viewBox="0 0 11 19"><path d="M1 1 L10 9.5 L1 18" fill="none" stroke="#fff" stroke-width="1.1"/></svg></div>
<div class="a tx" style="left:865px;top:478px;letter-spacing:-0.283px;">S<u>o</u>rt by</div>
<div class="a" style="left:1142px;top:477px"><svg width="11" height="19" viewBox="0 0 11 19"><path d="M1 1 L10 9.5 L1 18" fill="none" stroke="#fff" stroke-width="1.1"/></svg></div>
<div class="a tx" style="left:865px;top:506px;letter-spacing:-0.229px;">Grou<u>p</u> by</div>
<div class="a" style="left:1142px;top:505px"><svg width="11" height="19" viewBox="0 0 11 19"><path d="M1 1 L10 9.5 L1 18" fill="none" stroke="#fff" stroke-width="1.1"/></svg></div>
<div class="a tx" style="left:865px;top:534px;letter-spacing:-0.750px;">R<u>e</u>fresh</div>
<div class="a tx" style="left:865px;top:571px;letter-spacing:-0.148px;">Customize this <u>f</u>older...</div>
<div class="a tx dis" style="left:865px;top:608px;letter-spacing:-1.250px;"><u>P</u>aste</div>
<div class="a tx dis" style="left:865px;top:636px;letter-spacing:-0.508px;">Paste <u>s</u>hortcut</div>
<div class="a tx" style="left:865px;top:664px;letter-spacing:0.070px;"><u>U</u>ndo Delete</div>
<div class="a tx" style="left:865px;top:692px;letter-spacing:-0.192px;">Open Power<u>S</u>hell window here</div>
<div class="a tx" style="left:865px;top:729px;letter-spacing:-0.431px;"><u>G</u>ive access to</div>
<div class="a" style="left:1142px;top:728px"><svg width="11" height="19" viewBox="0 0 11 19"><path d="M1 1 L10 9.5 L1 18" fill="none" stroke="#fff" stroke-width="1.1"/></svg></div>
<div class="a tx" style="left:865px;top:766px;letter-spacing:-0.150px;">Ne<u>w</u></div>
<div class="a" style="left:1142px;top:765px"><svg width="11" height="19" viewBox="0 0 11 19"><path d="M1 1 L10 9.5 L1 18" fill="none" stroke="#fff" stroke-width="1.1"/></svg></div>
<div class="a tx" style="left:865px;top:803px;letter-spacing:-0.167px;">P<u>r</u>operties</div>
<div class="a tx" style="left:1098.5px;top:664px;letter-spacing:0.260px;">Ctrl+Z</div>
<div class="a sep" style="top:560px"></div>
<div class="a sep" style="top:597px"></div>
<div class="a sep" style="top:718px"></div>
<div class="a sep" style="top:755px"></div>
<div class="a sep" style="top:792px"></div>
</body></html>
